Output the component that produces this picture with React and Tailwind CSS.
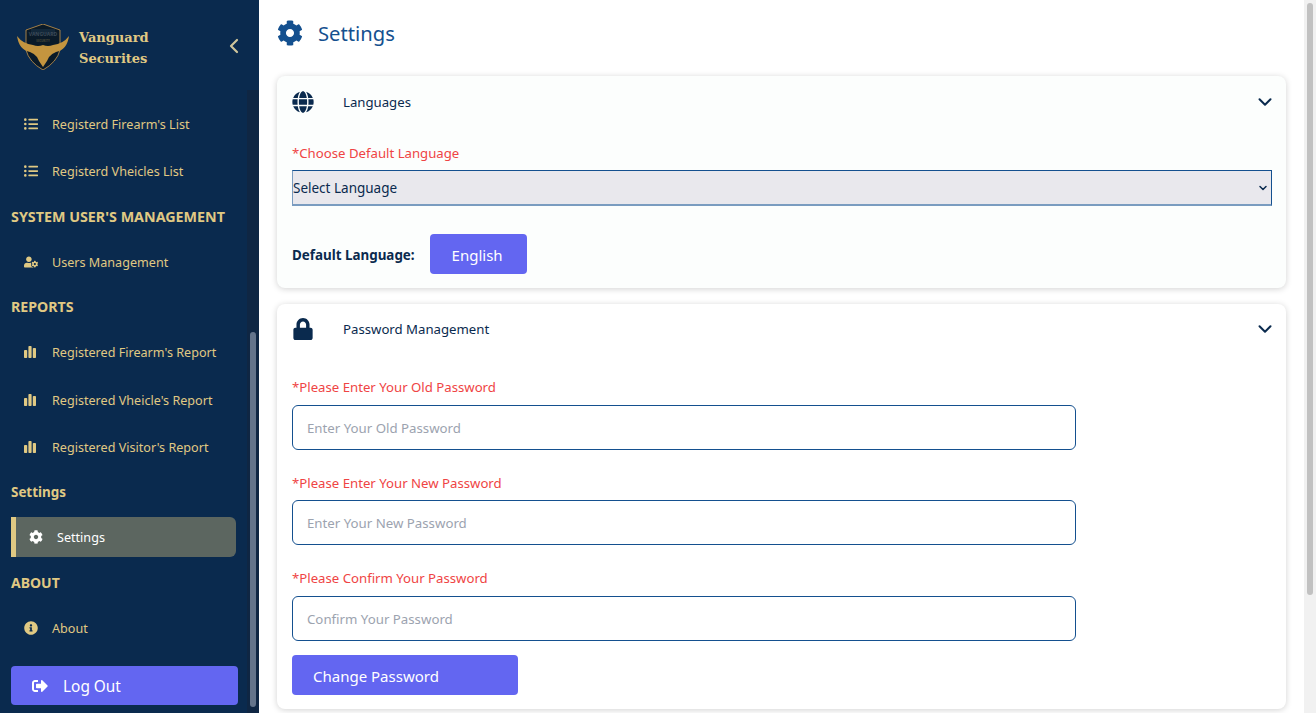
import { ChevronDown, ChevronLeft } from "lucide-react";
import { FaCog, FaGlobe, FaInfoCircle, FaListUl, FaLock, FaSignOutAlt, FaUserCog } from "react-icons/fa";

const FONT = "font-['Noto_Sans',sans-serif]";

function BarsIcon() {
  return (
    <svg viewBox="0 0 12 12" className="w-3 h-3" fill="currentColor">
      <rect x="0" y="4" width="3.2" height="8" rx="0.8" />
      <rect x="4.4" y="0" width="3.2" height="12" rx="0.8" />
      <rect x="8.8" y="2" width="3.2" height="10" rx="0.8" />
    </svg>
  );
}

function Logo() {
  return (
    <svg viewBox="0 0 52 46" className="w-[52px] h-[46px] shrink-0">
      <path d="M26 0 L43 6 L43 26 Q40 38 26 46 Q12 38 9 26 L9 6 Z" fill="#0a1a28" stroke="#c9974a" strokeWidth="0.8" />
      <path d="M14 5 L38 5 L38 10 L14 10 Z" fill="#13283a" />
      <text x="26" y="12" textAnchor="middle" fontSize="5" fontWeight="700" fill="#3c4a58" fontFamily="Noto Sans, sans-serif">VANGUARD</text>
      <text x="26" y="18" textAnchor="middle" fontSize="2.8" fontWeight="700" fill="#4a4a3a" fontFamily="Noto Sans, sans-serif">SECURITY</text>
      <path d="M0 12 Q6 20 16 21 Q21 23 26 21 Q31 23 36 21 Q46 20 52 12 Q50 26 39 28 Q34 30 32 33 L30 37 L26 43 L22 37 L20 33 Q18 30 13 28 Q2 26 0 12 Z" fill="#c4953f" />
    </svg>
  );
}

function NavItem({ icon, label, className = "" }) {
  return (
    <div className={`h-[46px] flex items-center pl-[24px] text-[12.6px] text-[#e0c983] ${className}`}>
      <span className="w-[28px] shrink-0 flex items-center text-[14px] pb-[2px]">{icon}</span>
      {label}
    </div>
  );
}

function SectionTitle({ children, className = "" }) {
  return <div className={`h-[22px] flex items-center pl-[11px] pb-[2px] font-bold text-[#e0c983] ${className}`}>{children}</div>;
}

function Sidebar() {
  return (
    <aside className="w-[259px] shrink-0 h-full bg-[#0a2a4e] flex flex-col">
      <div className="h-[90px] shrink-0 flex items-center pl-[17px] pr-[13px] pt-[4px]">
        <Logo />
        <div className="ml-[10px] pt-[2px] font-['DejaVu_Serif',serif] font-bold text-[13px] leading-[21px] text-[#e0c983]">
          <div>Vanguard</div>
          <div>Securites</div>
        </div>
        <ChevronLeft className="ml-auto -mt-[2px] w-6 h-6 text-[#cfc59b]" strokeWidth={2.2} />
      </div>
      <div className="flex-1 flex min-h-0">
        <nav className="w-[247px] shrink-0 pt-[12px] overflow-hidden">
          <NavItem icon={<FaListUl />} label="Registerd Firearm's List" />
          <NavItem icon={<FaListUl />} label="Registerd Vheicles List" className="mt-px" />
          <SectionTitle className="mt-3 text-[14.3px]">SYSTEM USER'S MANAGEMENT</SectionTitle>
          <NavItem icon={<FaUserCog />} label="Users Management" className="mt-[11px]" />
          <SectionTitle className="mt-[11px] text-[14.2px]">REPORTS</SectionTitle>
          <NavItem icon={<BarsIcon />} label="Registered Firearm's Report" className="mt-[11px]" />
          <NavItem icon={<BarsIcon />} label="Registered Vheicle's Report" className="mt-[2px]" />
          <NavItem icon={<BarsIcon />} label="Registered Visitor's Report" className="mt-px" />
          <SectionTitle className="mt-[11px] text-[13.4px]">Settings</SectionTitle>
          <div className="mt-[13px] ml-[11px] mr-[11px] h-10 flex items-center rounded-r-md border-l-[5px] border-[#e0c983] bg-[#5c6660] pl-[13px] text-[12.6px] text-white">
            <span className="w-[28px] shrink-0 flex items-center text-[14px]"><FaCog /></span>
            <span className="pt-[2px]">Settings</span>
          </div>
          <SectionTitle className="mt-[15px] text-[14px]">ABOUT</SectionTitle>
          <NavItem icon={<FaInfoCircle />} label="About" className="mt-3" />
          <div className="mt-[14px] ml-[11px] mr-[9px] h-[39px] flex items-center rounded bg-[#6366f1] pl-[21px] text-[15.4px] text-white">
            <FaSignOutAlt className="text-[16px] w-[31px] pr-[15px] shrink-0" />
            <span className="pt-[2px]">Log Out</span>
          </div>
        </nav>
        <div className="w-3 bg-[#0f2643] flex flex-col justify-end pb-[6px] items-center">
          <div className="w-[6px] h-[375px] rounded-full bg-[#64748b]" />
        </div>
      </div>
    </aside>
  );
}

function CardHeader({ icon, label, className = "" }) {
  return (
    <div className={`flex items-center text-[#0a2a4e] ${className}`}>
      <span className="w-[51px] shrink-0 flex items-center text-[22px]">{icon}</span>
      <span className="pt-[2px] text-[13.2px]">{label}</span>
      <ChevronDown className="ml-auto w-[22px] h-[22px] -mr-[5px]" strokeWidth={2.2} />
    </div>
  );
}

function PasswordField({ label, placeholder, className = "", inputGap = "mt-[8px]" }) {
  return (
    <div className={className}>
      <label className="block h-[19px] leading-[19px] text-[13.2px] text-[#ef4444]">{label}</label>
      <input
        placeholder={placeholder}
        className={`block ${inputGap} w-[784px] h-[45px] rounded-md border border-[#14508f] bg-white px-[14px] text-[13.25px] text-[#0a2a4e] placeholder-[#9ca3af] outline-none`}
      />
    </div>
  );
}

function Main() {
  return (
    <main className="flex-1 min-w-0 h-full overflow-hidden pl-[18px] pr-[18px]">
      <div className="h-[76px] flex items-center pb-[10px] text-[#14508f]">
        <FaCog className="w-[26px] h-[26px] shrink-0" />
        <h1 className="ml-[15px] text-[20.2px]">Settings</h1>
      </div>
      <section className="h-[212px] rounded-lg bg-[#fcfefd] shadow-[0_1px_6px_rgba(0,0,0,0.18)] px-[15px]">
        <CardHeader icon={<FaGlobe />} label="Languages" className="h-[52px]" />
        <div className="mt-4 h-[19px] leading-[19px] text-[13.2px] text-[#ef4444]">*Choose Default Language</div>
        <div className="relative mt-[7px] w-[980px]">
          <select className="block appearance-none w-full h-9 p-0 pt-[2px] bg-[#e9e8ed] border border-[#14508f] border-l-[#7a9cc0] border-b-2 border-b-[#7a9cc0] text-[13.5px] text-[#0a2a4e] outline-none">
            <option>Select Language</option>
          </select>
          <ChevronDown className="absolute right-[3px] top-[12px] w-3 h-3 text-[#0a2a4e]" strokeWidth={3} />
        </div>
        <div className="mt-[28px] flex items-center">
          <span className="pt-[3px] text-[13.4px] font-bold text-[#0a2a4e]">Default Language:</span>
          <button className="ml-[15px] w-[97px] h-10 rounded bg-[#6366f1] pt-[2px] pr-[2px] text-[15px] text-white">English</button>
        </div>
      </section>
      <section className="mt-4 h-[405px] rounded-lg bg-white shadow-[0_1px_6px_rgba(0,0,0,0.18)] px-[15px]">
        <CardHeader icon={<FaLock />} label="Password Management" className="h-[50px]" />
        <PasswordField label="*Please Enter Your Old Password" placeholder="Enter Your Old Password" className="mt-6" />
        <PasswordField label="*Please Enter Your New Password" placeholder="Enter Your New Password" className="mt-6" inputGap="mt-[7px]" />
        <PasswordField label="*Please Confirm Your Password" placeholder="Confirm Your Password" className="mt-6" />
        <button className="mt-[14px] w-[226px] h-10 rounded bg-[#6366f1] pl-[21px] pt-[2px] text-left text-[15px] text-white">Change Password</button>
      </section>
    </main>
  );
}

export default function App() {
  return (
    <div className={`w-[1316px] h-[713px] flex overflow-hidden bg-white ${FONT}`}>
      <Sidebar />
      <Main />
      <div className="w-3 shrink-0 bg-[#f1f1f1] pt-[3px] flex justify-center">
        <div className="w-[6px] h-[592px] rounded-full bg-[#c1c1c1]" />
      </div>
    </div>
  );
}
